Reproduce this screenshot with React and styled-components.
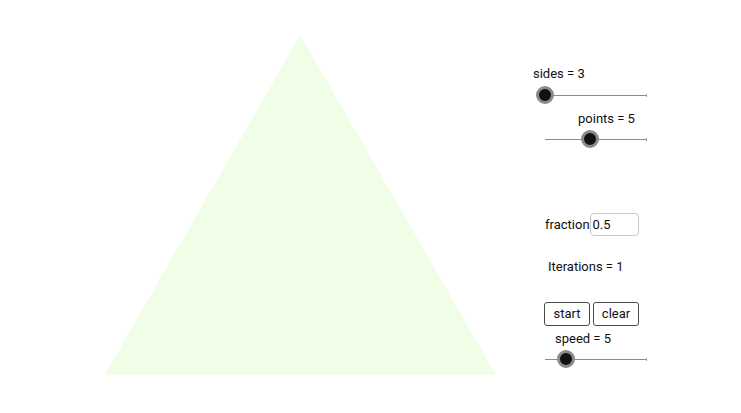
import React from 'react'
import styled, { createGlobalStyle } from 'styled-components'

const GlobalStyle = createGlobalStyle`
  html, body { margin: 0; padding: 0; background: #fff; }
  body { font-family: Roboto, "Liberation Sans", sans-serif; color: #111; }
`

const Page = styled.div`
  display: flex;
  width: 741px;
  height: 413px;
  overflow: hidden;
  background: #fff;
`

const Stage = styled.div`
  width: 533px;
  height: 413px;
  flex-shrink: 0;
`

const Panel = styled.div`
  display: flex;
  flex-direction: column;
  align-items: flex-start;
  padding-top: 66px;
  width: 208px;
`

const Label = styled.div`
  height: 16px;
  line-height: 16px;
  font-size: 13px;
  white-space: nowrap;
  margin-left: ${p => p.$indent || 0}px;
  margin-top: ${p => p.$top || 0}px;
`

const Track = styled.div`
  position: relative;
  width: 102px;
  height: 18px;
  margin-left: 12px;
  margin-top: ${p => p.$top || 0}px;
  &::before {
    content: "";
    position: absolute;
    left: 0; right: 0; top: 9px;
    height: 1px;
    background: #8c8c8c;
  }
  &::after {
    content: "";
    position: absolute;
    right: 0; top: 8px;
    width: 1px; height: 3px;
    background: #9a9a9a;
  }
`

const Knob = styled.div`
  position: absolute;
  top: 0;
  width: 18px;
  height: 18px;
  margin-left: -9px;
  border-radius: 50%;
  box-sizing: border-box;
  background: #111;
  border: 3px solid #8a8a8a;
  z-index: 1;
`

const Row = styled.div`
  display: flex;
  align-items: center;
  gap: ${p => p.$gap || 0}px;
  margin-left: ${p => p.$indent || 0}px;
  margin-top: ${p => p.$top || 0}px;
`

const FieldLabel = styled.span`
  font-size: 13px;
  line-height: 16px;
`

const Input = styled.div`
  width: 49px;
  height: 23px;
  box-sizing: border-box;
  border: 1px solid #c8c8c8;
  border-radius: 4px;
  font-size: 13px;
  line-height: 21px;
  padding-left: 2px;
`

const Button = styled.div`
  width: 46px;
  height: 24px;
  box-sizing: border-box;
  border: 1px solid #4a4a4a;
  border-radius: 3px;
  background: #fff;
  font-size: 13px;
  line-height: 22px;
  text-align: center;
`

function Slider({ value, top }) {
  return (
    <Track $top={top}>
      <Knob style={{ left: `${value * 100}%` }} />
    </Track>
  )
}

export default function App() {
  return (
    <Page>
      <GlobalStyle />
      <Stage>
        <svg width="533" height="413" viewBox="0 0 533 413">
          <polygon points="300.3,35 105,374.5 495.7,374.5" fill="#f0fde7" />
        </svg>
      </Stage>
      <Panel>
        <Label>sides = 3</Label>
        <Slider value={0} top={4} />
        <Label $indent={45} $top={7}>points = 5</Label>
        <Slider value={0.44} top={3} />
        <Row $indent={12} $gap={0} $top={65}>
          <FieldLabel>fraction</FieldLabel>
          <Input>0.5</Input>
        </Row>
        <Label $indent={15} $top={23}>Iterations = 1</Label>
        <Row $indent={11} $gap={3} $top={27}>
          <Button>start</Button>
          <Button>clear</Button>
        </Row>
        <Label $indent={22} $top={5}>speed = 5</Label>
        <Slider value={0.206} top={3} />
      </Panel>
    </Page>
  )
}
